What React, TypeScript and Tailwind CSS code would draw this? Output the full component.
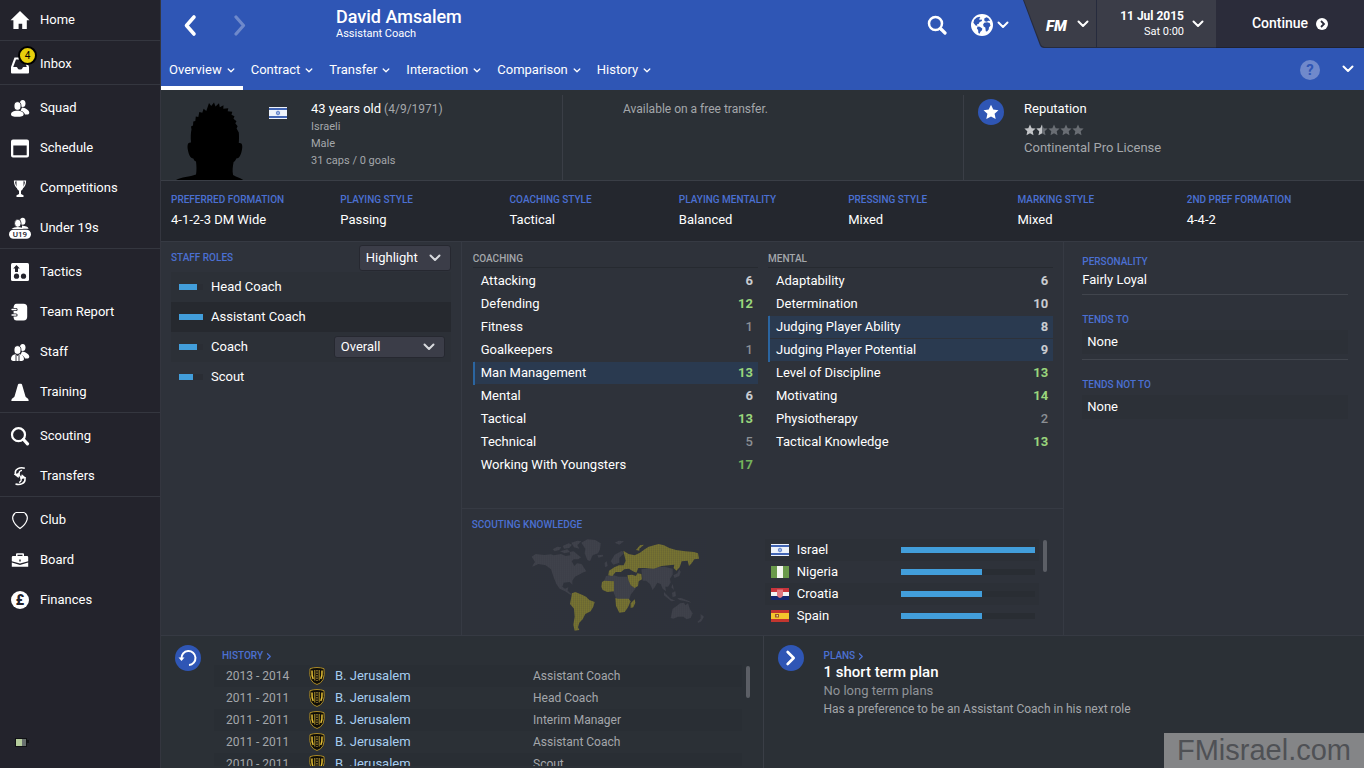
import { useId, type ReactNode } from "react"
import clsx from "clsx"

/* ---------- icons ---------- */

const Chevron = ({ className = "" }: { className?: string }) => (
  <svg viewBox="0 0 12 8" className={clsx("shrink-0 fill-none stroke-current", className)} aria-hidden="true">
    <path d="M1.5 1.5 6 6l4.500-4.500" strokeWidth="2" strokeLinecap="round" strokeLinejoin="round" />
  </svg>
)

const NavSvg = ({ children }: { children: ReactNode }) => (
  <svg viewBox="0 0 20 20" className="h-5 w-5 fill-white" aria-hidden="true">
    {children}
  </svg>
)

const Heads = () => (
  <>
    <path d="M12 9.500c3 .5 7.300 2.300 7.300 5.300 0 1.700-1.800 2-4.300 1.700-.6-1.900-2-3-4.400-3.700z" />
    <ellipse cx="12.700" cy="5.500" rx="2.800" ry="3.600" />
    <ellipse cx="7.500" cy="8" rx="3.500" ry="4.300" className="stroke-[#23232c]" strokeWidth=".8" />
  </>
)

const icons: Record<string, ReactNode> = {
  Home: (
    <NavSvg>
      <path d="M10 1 19.500 10.200H16.800V19H12.200V13.800H8.600V19H3.400V10.200H.5z" />
    </NavSvg>
  ),
  Inbox: (
    <NavSvg>
      <path
        fillRule="evenodd"
        d="M4.500 3.500h11L19 13v5.500q0 1-1 1H2q-1 0-1-1V13zM6 5.500 3.200 13H6.300q1 0 1.300 1.200.3 1.300 2.400 1.300t2.400-1.300Q12.700 13 13.700 13h3.100L14 5.500z"
      />
    </NavSvg>
  ),
  Squad: (
    <NavSvg>
      <Heads />
      <path d="M1 16.200c0-2 2.500-3.400 6.300-3.400s6.300 1.400 6.300 3.400-2.500 2.600-6.300 2.600-6.300-.6-6.300-2.600z" />
    </NavSvg>
  ),
  Schedule: (
    <NavSvg>
      <path fillRule="evenodd" d="M3 1.500h14q2 0 2 2v14q0 2-2 2H3q-2 0-2-2v-14q0-2 2-2zM3.300 7.500v9.700h13.400V7.500z" />
    </NavSvg>
  ),
  Competitions: (
    <NavSvg>
      <path d="M6.500 2.500h7v5q0 4-2.500 5.200v3.300l2.500 1.200v1.800h-7v-1.800L9 16v-3.300Q6.500 11.500 6.500 7.500z" />
      <path d="M6.500 3H4.500q0 5 3 6.700M13.500 3h2q0 5-3 6.700" className="fill-none stroke-white" strokeWidth="1.200" />
    </NavSvg>
  ),
  "Under 19s": (
    <svg viewBox="0 0 24 24" className="h-6 w-6 shrink-0 fill-white" aria-hidden="true">
      <path d="M14 9.500c3 .3 6.500 1.500 6.500 3.300H14z" />
      <ellipse cx="14.700" cy="5.200" rx="2.800" ry="3.500" />
      <ellipse cx="9.800" cy="7.300" rx="3.300" ry="4" className="stroke-[#23232c]" strokeWidth=".8" />
      <path d="M3.500 13q2-2 6.300-2t6 2z" />
      <rect x="1" y="13.800" width="22" height="9" rx="4.500" />
      <text x="12" y="21.300" textAnchor="middle" className="fill-[#23232c] font-[Roboto] text-[8px] font-medium">
        U19
      </text>
    </svg>
  ),
  Tactics: (
    <NavSvg>
      <rect x="1" y="1" width="18" height="18" rx="1.500" />
      <g className="fill-[#23232c]">
        <path d="M6.500 3 9.800 6.600H8V10H5V6.600H3.200z" />
        <circle cx="6.500" cy="14.200" r="2.600" />
        <circle cx="13.500" cy="14.200" r="2.600" />
      </g>
    </NavSvg>
  ),
  "Team Report": (
    <NavSvg>
      <path d="M6.500 1.800h7q3.700 0 3.700 3.500v9.500q0 3.700-3.700 3.700h-7Q4 18.500 3.600 16v-1.500h2.500q1.500 0 1.500-1.500t-1.500-1.500H3.600V9h2.500q1.500 0 1.500-1.500T6.100 6H3.600Q3.500 2 6.500 1.800z" />
      <path d="M2 7.500h4M2 13h4" className="stroke-white" strokeWidth="1.300" strokeLinecap="round" />
    </NavSvg>
  ),
  Staff: (
    <NavSvg>
      <Heads />
      <path d="M1 17c0-2.500 1.600-4.500 4.400-4.700L7.500 14l2.100-1.700C12.400 12.500 14 14.500 14 17c0 1.600-1.300 2-3.500 2h-6C2.300 19 1 18.600 1 17z" />
      <path d="M6 13v6M9 13v6" className="stroke-[#23232c]" strokeWidth=".9" />
    </NavSvg>
  ),
  Training: (
    <NavSvg>
      <path d="M8 2.500q.3-.8 1-.8h2q.7 0 1 .8L15.500 14.500q.4 1 1.300 1.300 2 .7 1.900 3.200H1.300q-.1-2.500 1.900-3.200.9-.3 1.300-1.300z" />
    </NavSvg>
  ),
  Scouting: (
    <NavSvg>
      <circle cx="8.500" cy="8.700" r="6.500" className="fill-none stroke-white" strokeWidth="2.200" />
      <path d="m13.500 13.500 4 4.300" className="stroke-white" strokeWidth="3.200" strokeLinecap="round" />
    </NavSvg>
  ),
  Transfers: (
    <NavSvg>
      <g className="fill-none stroke-white" strokeWidth="1.500">
        <path d="M14.800 2.200C9.500.8 5 3 5.300 7v2" />
        <path d="M5.500 18c5 1.500 9.800-.8 9.500-4.800v-2" />
        <path d="M9 16.300c2-.5 2.800-2.300 1.800-4.800-.6-1.300-1.800-2-1.800-4 0-1.700 1-3 3-3.200" strokeWidth="1.300" />
      </g>
      <path d="M3.800 8.200 9.800 6.800 8.500 12zM16.200 12 10.300 13.200l1.500-5z" />
    </NavSvg>
  ),
  Club: (
    <NavSvg>
      <path
        d="M6.200 2.500h7.600q1 .2 1.600 1 2.600 2.800 1.700 6.200-1.400 5-7.100 8.800Q4.300 14.700 2.900 9.700 2 6.300 4.600 3.500q.6-.8 1.600-1z"
        className="fill-none stroke-white"
        strokeWidth="1.200"
      />
    </NavSvg>
  ),
  Board: (
    <NavSvg>
      <path fillRule="evenodd" d="M6 6V4.300q0-1 1-1h6q1 0 1 1V6h3q1.200 0 1.200 1.200v4L10 13.600 1.800 11.200v-4Q1.800 6 3 6zm1.500 0h5V4.800h-5zM9.300 9.600v1.800h1.400V9.600z" />
      <path d="m1.800 12.500 8.200 2.400 8.200-2.400v4.300H1.800z" />
    </NavSvg>
  ),
  Finances: (
    <NavSvg>
      <circle cx="10" cy="10" r="9" />
      <text x="10" y="15" textAnchor="middle" className="fill-[#23232c] font-[Roboto] text-[14px] font-black">
        £
      </text>
    </NavSvg>
  ),
}

const Star = ({ className = "" }: { className?: string }) => (
  <svg viewBox="0 0 12 12" className={clsx("shrink-0", className)} aria-hidden="true">
    <path d="m6 .5 1.700 3.700 3.900.4-2.900 2.700.8 4L6 9.300l-3.500 2 .8-4L.4 4.600l3.900-.4z" className="fill-current" />
  </svg>
)

const Flag = ({ country }: { country: string }) => {
  const art: Record<string, ReactNode> = {
    Israel: (
      <>
        <path d="M0 0h18v12H0z" fill="#eef3fb" />
        <path d="M0 1h18v2H0zM0 9h18v2H0z" fill="#4265b4" />
        <path d="m9 3.800 1.900 3.300H7.100zM9 8.200 7.100 4.900h3.800z" fill="none" stroke="#4f74c4" strokeWidth=".7" />
      </>
    ),
    Nigeria: (
      <>
        <path d="M0 0h18v12H0z" fill="#6a9a4b" />
        <path d="M6 0h6v12H6z" fill="#f3f6f0" />
      </>
    ),
    Croatia: (
      <>
        <path d="M0 0h18v4H0z" fill="#c9343c" />
        <path d="M0 4h18v4H0z" fill="#f2f2f4" />
        <path d="M0 8h18v4H0z" fill="#14256f" />
        <path d="M6 1.500h6v5Q12 9 9 10 6 9 6 6.500z" fill="#e0777f" />
      </>
    ),
    Spain: (
      <>
        <path d="M0 0h18v12H0z" fill="#c2362f" />
        <path d="M0 3h18v6H0z" fill="#f4c72c" />
        <path d="M4 4h4v3.500H4z" fill="#9a5a25" />
        <path d="M5.500 5H7v1.500H5.500z" fill="#e8d9a0" />
      </>
    ),
  }
  return (
    <svg viewBox="0 0 18 12" className="h-3 w-[18px] shrink-0" role="img" aria-label={country}>
      {art[country]}
    </svg>
  )
}

const Crest = () => (
  <svg viewBox="0 0 16 18" className="h-[18px] w-4" aria-hidden="true">
    <path d="M8 .5q4 0 7 1.200 1 6.300-1 11Q12 16.500 8 17.500 4 16.500 2 12.700 0 8 1 1.700 4 .5 8 .5z" fill="#0d0c08" stroke="#a98a28" strokeWidth="1" />
    <path d="M3 3.500q-.4 5.500 1.200 8.500M13 3.500q.4 5.500-1.200 8.500" stroke="#e3be35" strokeWidth="1.500" fill="none" />
    <path d="M5.800 3v10.500M10.200 3v10.500" stroke="#e3be35" strokeWidth=".8" />
    <path d="M8 3v11" stroke="#8a7030" strokeWidth="1.600" strokeDasharray="1.500 1" />
  </svg>
)

const Silhouette = () => (
  <svg viewBox="0 0 70 78" className="h-[78px] w-[70px] shrink-0" role="img" aria-label="No photo">
    <path d="M0 78c5-3 14-3 20-5.500.8-4 .5-9 0-13-1.500-.5-2-1.500-2.700-3-3 0-4.500-4-5.300-8-1-5-.5-8.500 3-8-.5-5-.2-10 .5-13l-.5-3 2-1 .3-4 2-.5.500-4.500 2.500.5 1-5 3 .7 1.300-4 2.700 2.200L33 1l2.200 3L38 .5l1.500 4L43 1.200l.8 4 3.700-2-.2 3.500 5-.5-.6 3 4.600.6-.8 3 3 1.500-1 2.500 3 2.500-1.200 2 2.300 3-1 2.200 2.200 4c.3 3 .3 7 0 10.500 3.700-.8 4 3 3 7.500-1 4.500-2.500 8-5.500 8-.8 2-1.500 3-2.700 3.500-.8 4-1.500 9-.5 13 4 2.500 6.500 2.500 10.200 5z" className="fill-black" />
  </svg>
)

const WorldMap = () => {
  const dots = useId()
  return (
    <svg viewBox="210 95 531 285" className="h-[95px] w-[177px]" role="img" aria-label="Scouting knowledge map">
      <defs>
        <pattern id={dots} width="6" height="6" patternUnits="userSpaceOnUse">
          <path d="M0 5h6M5 0v6" stroke="#2e323a" strokeWidth="1" strokeOpacity=".45" />
        </pattern>
      </defs>
      <g fill="#40434b">
        <path d="m215 154 12-8 26 3 20-2 8 3 22-4 14 6 14-2-2-10 12-2 14 12 8 6-8 6-14 0-6 6 8 14 8-8 14 2 6 10 8 12-12 4-6 4-16 8-8 12 0 12-8-8-18 2-4 12 8 6 10-4-2 10 8 8 8 2-8 2-16-10-16-8-10-14-8-20-8-24-16-12-22-4-18 8 2-6 6-8z" />
        <path d="m278 132 14-8 12 2-6 8-14 4zM308 122l18-8 10 4-8 10-16 2zM334 112l18-6 12 2-12 12 6 10-16-4zM300 138l22-6 8 8-16 4z" />
        <path d="m364 112 18-10 24 2 16 10-2 18-6 12-16 6-8 18-8-4-8-20 2-14z" />
        <path d="m412 150 16-2 2 5-14 4zM464 112l12-6 16 2-14 10zM434 172l6-4 3 14-8 4zM452 168l12-20 22-12 6 8-14 14 0 14-18 6z" />
        <path d="m438 212 18-4 20 6 26 0 4 10 8 18 14 2-2 6-14 18-4 14-20 4-20-6-8-22 2-28-26-2-8 10z" />
        <path d="m544 192 40-6 30-2 24 6 0 18-8 12 2 12-8 12-8 0 2 14-10-8-6-14-10-4-8 14-6 8-8-18-12-10-10 0z" />
        <path d="m640 210 12-6 6-12 4 8-4 12-14 6zM612 260l8 8 12 12 14 6-12 2-22-18zM636 262l10-4 2 14-10 4zM652 278l12 0 24 10 6 4-18-4-18-4zM634 246l4-10 4 18z" />
        <path d="m638 310 12-8 10-8 12-2 4 8 8-6 6 18 8 12-6 14-12 4-10-8-16 0-14 6-8-2z" />
        <path d="m722 326 10 8-8 14-8 4-4-2 10-10z" />
      </g>
      <g fill="#7a7630">
        <path d="m490 136 16 10 18 4 16-8 14-10 12-8 16-4 14-4 16 4 16 8 20 6 28 4 26 2 12 4 3 16-14 2-8 12-8 8-4-16-18 2-6 18-10 10-8-8 2-10-16 2-22 2-24 8-24-2-22 0-6 14-10-4-12-8-14 2-10 8-16 0-10 12-12-2 2-14 16-10 14-6 14 0 6-14z" />
        <path d="m528 134 12-14 12-2-14 12 0 6zM502 210l14-2 12 4 4-8 12 2 2 16-10 6-2 14-10 6-12-8-6-14z" />
        <path d="m426 230 6-4 30 2 0 30-20 2-14-6-4-10zM466 278l8 2 32 0 6 8-8 18-10 14-16 2-10-20zM512 294l12-12 2 10-6 14-8 2z" />
        <path d="m336 264 10-4 20 8 12 6 10 10 16 6-4 14-8 14-16 8-8 16-10 10-4 14 4 8-14 2-4-18 4-24-2-24-12-14z" />
      </g>
      <path d="M210 95h531v285H210z" fill={`url(#${dots})`} />
    </svg>
  )
}

/* ---------- data ---------- */

const navGroups = [
  ["Home"],
  ["Inbox"],
  ["Squad", "Schedule", "Competitions", "Under 19s"],
  ["Tactics", "Team Report", "Staff", "Training"],
  ["Scouting", "Transfers"],
  ["Club", "Board", "Finances"],
]

const tabs = ["Overview", "Contract", "Transfer", "Interaction", "Comparison", "History"]

const styles = [
  ["Preferred Formation", "4-1-2-3 DM Wide"],
  ["Playing Style", "Passing"],
  ["Coaching Style", "Tactical"],
  ["Playing Mentality", "Balanced"],
  ["Pressing Style", "Mixed"],
  ["Marking Style", "Mixed"],
  ["2nd Pref Formation", "4-4-2"],
]

const roles = [
  { name: "Head Coach", level: 75 },
  { name: "Assistant Coach", level: 100, active: true },
  { name: "Coach", level: 75, select: true },
  { name: "Scout", level: 60 },
]

type Attribute = { name: string; value: number; key?: boolean }

const coaching: Attribute[] = [
  { name: "Attacking", value: 6 },
  { name: "Defending", value: 12 },
  { name: "Fitness", value: 1 },
  { name: "Goalkeepers", value: 1 },
  { name: "Man Management", value: 13, key: true },
  { name: "Mental", value: 6 },
  { name: "Tactical", value: 13 },
  { name: "Technical", value: 5 },
  { name: "Working With Youngsters", value: 17 },
]

const mental: Attribute[] = [
  { name: "Adaptability", value: 6 },
  { name: "Determination", value: 10 },
  { name: "Judging Player Ability", value: 8, key: true },
  { name: "Judging Player Potential", value: 9, key: true },
  { name: "Level of Discipline", value: 13 },
  { name: "Motivating", value: 14 },
  { name: "Physiotherapy", value: 2 },
  { name: "Tactical Knowledge", value: 13 },
]

const knowledge = [
  { country: "Israel", level: 100 },
  { country: "Nigeria", level: 60 },
  { country: "Croatia", level: 60 },
  { country: "Spain", level: 60 },
]

const history = [
  ["2013 - 2014", "Assistant Coach"],
  ["2011 - 2011", "Head Coach"],
  ["2011 - 2011", "Interim Manager"],
  ["2011 - 2011", "Assistant Coach"],
  ["2010 - 2011", "Scout"],
]

const valueColor = (v: number) => {
  if (v > 15) return "text-[#74b45c] font-bold"
  if (v > 10) return "text-[#9ad67c] font-bold"
  if (v > 5) return "text-[#c9ccd0] font-bold"
  return "text-[#8b8f94] font-medium"
}

/* ---------- pieces ---------- */

const Label = ({ children, className = "text-[#4b70d2]" }: { children: ReactNode; className?: string }) => (
  <h2 className={clsx("text-[10px] leading-4 font-medium uppercase", className)}>{children}</h2>
)

const Dropdown = ({ label, value, className }: { label: string; value: string; className: string }) => (
  <div className={clsx("relative", className)}>
    <select
      aria-label={label}
      className="h-full w-full appearance-none rounded-[3px] border border-[#262830] bg-[#3b3d48] pl-1.5 text-[13px] text-white"
    >
      <option>{value}</option>
    </select>
    <Chevron className="pointer-events-none absolute top-1/2 right-2.5 h-2 w-3 -translate-y-1/2 text-[#d8dade]" />
  </div>
)

const AttributeTable = ({ title, rows }: { title: string; rows: Attribute[] }) => (
  <div>
    <div className="border-b border-[#262a30]">
      <Label className="text-[#a4a7ab]">{title}</Label>
    </div>
    <table className="mt-px w-full border-collapse" aria-label={title}>
      <tbody>
        {rows.map(({ name, value, key }) => (
          <tr key={name} className={clsx("h-[23px] border-b border-[#2e323a]", key && "bg-[#2a3a50]")}>
            <th
              scope="row"
              className={clsx("border-l-2 pl-1.5 text-left font-normal text-white", key ? "border-l-[#2b65a0]" : "border-l-transparent")}
            >
              {name}
            </th>
            <td className={clsx("pr-[5px] text-right", valueColor(value))}>{value}</td>
          </tr>
        ))}
      </tbody>
    </table>
  </div>
)

const Sidebar = () => (
  <nav className="flex w-[161px] shrink-0 flex-col border-r border-[#34363f] bg-[#23232c]">
    {navGroups.map((group, i) => (
      <ul key={i} className={clsx("pt-[3px] first:pt-0", i < navGroups.length - 1 && "border-b border-[#34363f]")}>
        {group.map((item) => (
          <li key={item}>
            <a href="#" className="flex h-10 items-center gap-2.5 pl-2.5 text-white">
              <span className="relative flex w-5 justify-center">
                {icons[item]}
                {item === "Inbox" && (
                  <span className="absolute -top-2 left-2 flex h-[19px] w-[19px] items-center justify-center rounded-full border-2 border-black bg-[#e6cf0c] text-[10px] text-black">
                    4
                  </span>
                )}
              </span>
              {item}
            </a>
          </li>
        ))}
      </ul>
    ))}
    <svg viewBox="0 0 14 9" className="mt-auto mb-[21px] ml-[15px] h-[9px] w-3.5" role="img" aria-label="Battery">
      <path d="M0 0h12v2h2v3h-2v4H0z" className="fill-[#101114]" />
      <path d="M1 1h6v7H1z" className="fill-[#b5cc9c]" />
      <path d="M7 1h4v7H7z" className="fill-[#68706e]" />
    </svg>
  </nav>
)

const Header = () => (
  <header className="bg-[#2f56b5] text-white">
    <div className="flex h-12 items-start">
      <button aria-label="Back" className="mt-3 ml-5 h-7 w-5">
        <svg viewBox="0 0 20 28" className="fill-none stroke-white" strokeWidth="3.600" strokeLinecap="round" strokeLinejoin="round">
          <path d="M13 5 5.500 13.500 13 22" />
        </svg>
      </button>
      <button aria-label="Forward" className="mt-3 ml-7 h-7 w-5 opacity-30">
        <svg viewBox="0 0 20 28" className="fill-none stroke-white" strokeWidth="3.200" strokeLinecap="round" strokeLinejoin="round">
          <path d="m7 5 7.500 8.500L7 22" />
        </svg>
      </button>
      <div className="mt-1.5 ml-[87px]">
        <h1 className="text-[18px] leading-[22px] font-medium">David Amsalem</h1>
        <p className="text-[11px] leading-3">Assistant Coach</p>
      </div>
      <button aria-label="Search" className="mt-[15px] ml-auto h-5 w-5">
        <svg viewBox="0 0 20 20" className="fill-none stroke-white" strokeLinecap="round">
          <circle cx="8.500" cy="8.500" r="6.500" strokeWidth="2.500" />
          <path d="m14 14 4 4" strokeWidth="3.200" />
        </svg>
      </button>
      <button aria-label="World" className="mt-3.5 ml-6 flex h-[22px] items-center gap-1">
        <svg viewBox="0 0 22 22" className="h-[22px] w-[22px]">
          <circle cx="11" cy="11" r="11" className="fill-white" />
          <g className="fill-[#2f56b5]">
            <path d="M3.200 5.800 5.800 3.500l2.700-.8.9 1.300-1.700 1.100 1.300.7 1.700-.3.300 1.600-2.300 1-1.200 1.900-1.500.3.300 1.500-1.700-.4-2.200-2.700z" />
            <path d="m6.500 12.400 2.300.3 2.500 1.800-.3 1.800-1.600 1.400-.8 2-1.200-.6-.3-3.200-1.200-1.500z" />
            <path d="m13.500 4.300 2.200-1 2 1.300 1.500 2.300-1.900-.1-1.400.9-2.100-.4-.6-1.300z" />
            <path d="m13.200 8.700 2.900-.4 2.600.8.800 2.600-1.500 1.500-.3 2.300-1.700 2.100-1.200-.4-.5-3.800-1.700-.9-.5-1.900z" />
          </g>
        </svg>
        <Chevron className="h-2 w-3" />
      </button>
      <button className="relative ml-3.5 flex h-[47px] w-[73px] items-center pl-[23px]">
        <svg viewBox="0 0 73 48" className="absolute inset-x-0 top-0 h-12 w-[73px]" aria-hidden="true">
          <path d="M0 0h73v48H21q-3 0-4.200-3z" className="fill-[#262b3d]" />
          <path d="M1 0h72v47H21.500q-2.600 0-3.700-2.700z" className="fill-[#3b3d48]" />
        </svg>
        <span className="relative pt-1 text-[15px] leading-5 font-black italic">FM</span>
        <Chevron className="absolute right-[7px] h-2 w-3" />
      </button>
      <button className="flex h-12 w-[120px] items-center justify-end gap-2 border-b border-l border-[#262b3d] bg-[#3b3d48] pr-3">
        <span className="pt-px text-right leading-4">
          <span className="block text-[12px] font-bold">11 Jul 2015</span>
          <span className="block text-[11px]">Sat 0:00</span>
        </span>
        <Chevron className="h-2 w-3" />
      </button>
      <button className="flex h-12 w-[148px] items-center justify-center gap-2 border-b border-[#20222e] bg-[#2b2c3a] text-[14px] font-medium">
        Continue
        <svg viewBox="0 0 12 12" className="h-3 w-3" aria-hidden="true">
          <circle cx="6" cy="6" r="6" className="fill-white" />
          <path d="m5 3 3 3-3 3" className="fill-none stroke-[#2b2c3a]" strokeWidth="1.800" />
        </svg>
      </button>
    </div>
    <div className="flex h-[42px] items-stretch">
      {tabs.map((tab, i) => (
        <button
          key={tab}
          className={clsx("flex items-center gap-[5px] border-b-4 px-2 pt-1.5", i === 0 ? "border-white" : "border-transparent")}
        >
          {tab}
          <Chevron className="h-[5px] w-2" />
        </button>
      ))}
      <button aria-label="Help" className="mt-3 ml-auto h-5 w-5 rounded-full bg-[#7089cb] text-[15px] leading-5 font-bold text-[#2f56b5]">
        ?
      </button>
      <button aria-label="More" className="mr-2 ml-5 px-0.5">
        <Chevron className="h-2 w-3" />
      </button>
    </div>
  </header>
)

const RoundIcon = ({ children }: { children: ReactNode }) => (
  <span className="flex h-[26px] w-[26px] shrink-0 items-center justify-center rounded-full bg-[#2f56b5] text-white">{children}</span>
)

const Summary = () => (
  <section className="grid grid-cols-3 border-b border-[#3a3e46] bg-[#2b3036] pt-[5px] text-[#a4a7ab]">
    <div className="flex pl-[15px]">
      <div className="pt-[7px]">
        <Silhouette />
      </div>
      <div className="pt-3 pl-[23px]">
        <Flag country="Israel" />
      </div>
      <div className="pt-[5px] pl-6 text-[11px] leading-[17px]">
        <p className="text-[12px] leading-[18px]">
          <span className="text-[13px] text-white">43 years old</span> (4/9/1971)
        </p>
        <p>Israeli</p>
        <p>Male</p>
        <p>31 caps / 0 goals</p>
      </div>
    </div>
    <p className="border-l border-[#3a3e46] pt-[5px] pl-[60px] text-[12px] leading-[18px]">Available on a free transfer.</p>
    <div className="flex gap-5 border-l border-[#3a3e46] pt-1 pl-3.5">
      <RoundIcon>
        <Star className="h-4 w-4" />
      </RoundIcon>
      <div className="pt-px leading-[18px]">
        <h2 className="text-white">Reputation</h2>
        <div className="mt-1.5 mb-[3px] flex h-3" role="img" aria-label="1.5 out of 5 stars">
          {[1, 2, 3, 4, 5].map((n) => (
            <span key={n} className="relative">
              <Star className={clsx("h-3 w-3", n === 1 ? "text-[#c3c5c8]" : "text-[#696d73]")} />
              {n === 2 && (
                <span className="absolute top-0 left-0 w-1.5 overflow-hidden">
                  <Star className="h-3 w-3 text-[#c3c5c8]" />
                </span>
              )}
            </span>
          ))}
        </div>
        <p>Continental Pro License</p>
      </div>
    </div>
  </section>
)

const StyleStrip = () => (
  <dl className="grid grid-cols-7 bg-[#24272e] pt-[11px] pr-2 pb-[11px] pl-2.5">
    {styles.map(([name, value]) => (
      <div key={name}>
        <dt className="text-[10px] leading-4 font-medium text-[#4b70d2] uppercase">{name}</dt>
        <dd className="pt-0.5 leading-5 text-white">{value}</dd>
      </div>
    ))}
  </dl>
)

const StaffRoles = () => (
  <section className="border-r border-[#363a43] px-2.5 pt-[3px]">
    <div className="flex items-center justify-between">
      <Label>Staff Roles</Label>
      <Dropdown label="Highlight" value="Highlight" className="h-[26px] w-[92px]" />
    </div>
    <ul className="pt-px">
      {roles.map(({ name, level, active, select }) => (
        <li key={name} className={clsx("flex h-[30px] items-center pr-1.5 pl-2 text-white", active ? "bg-[#26292f]" : "odd:bg-[#2c3037]")}>
          <span className="mr-2 h-1.5 w-6 bg-[#2a2d34]">
            <span className="block h-full bg-[#429edb]" style={{ width: `${level}%` }} />
          </span>
          {name}
          {select && <Dropdown label="Coach role" value="Overall" className="ml-auto h-[22px] w-[111px]" />}
        </li>
      ))}
    </ul>
  </section>
)

const ScoutingKnowledge = () => (
  <section className="flex grow flex-col border-t border-[#363a43] pt-2 pl-2.5">
    <Label>Scouting Knowledge</Label>
    <div className="flex">
      <div className="w-[293px] pt-1 pl-[58px]">
        <WorldMap />
      </div>
      <div className="flex grow gap-1 pt-1.5 pr-4">
        <ul className="grow">
          {knowledge.map(({ country, level }) => (
            <li key={country} className="flex h-[22px] items-center gap-2 pr-1 pl-1.5 text-white odd:bg-[#2c3037]">
              <Flag country={country} />
              <span className="grow">{country}</span>
              <span className="h-1.5 w-[134px] bg-[#292d33]">
                <span className="block h-full bg-[#429edb]" style={{ width: `${level}%` }} />
              </span>
            </li>
          ))}
        </ul>
        <span className="mt-px h-8 w-1 rounded-full bg-[#5c5f66]" />
      </div>
    </div>
  </section>
)

const Personality = () => (
  <section className="border-l border-[#363a43] pt-3 pr-4 pl-[18px] text-white">
    <Label>Personality</Label>
    <p className="border-b border-[#41454d] pb-1 leading-5">Fairly Loyal</p>
    <div className="border-b border-[#41454d] pt-[17px] pb-[5px]">
      <Label>Tends To</Label>
      <p className="mt-0.5 bg-[#2c3037] pl-[5px] leading-6">None</p>
    </div>
    <div className="pt-[17px]">
      <Label>Tends Not To</Label>
      <p className="mt-0.5 bg-[#2c3037] pl-[5px] leading-6">None</p>
    </div>
  </section>
)

const History = () => (
  <section className="flex pt-[9px] pr-px pl-3.5">
    <RoundIcon>
      <svg viewBox="0 0 20 20" className="h-5 w-5 fill-none stroke-white" strokeWidth="2" aria-hidden="true">
        <path d="M3.500 10.500a7 7 0 1 1 7.500 6.500" />
        <path d="M.5 9.500h6L3.500 13z" className="fill-white stroke-none" />
      </svg>
    </RoundIcon>
    <div className="ml-[13px] grow pt-[3px]">
      <a href="#" className="flex items-center gap-0.5 pl-2 text-[#4b70d2]">
        <Label>History</Label>
        <Chevron className="h-[5px] w-2 -rotate-90" />
      </a>
      <div className="mt-px flex h-[101px] overflow-hidden pr-3">
        <table className="h-min w-full table-fixed border-collapse" aria-label="History">
          <tbody>
            {history.map(([years, role], i) => (
              <tr key={i} className="h-[22px] text-[12px] text-[#a4a7ab] odd:bg-[#292e34]">
                <td className="w-[95px] pl-3">{years}</td>
                <td className="w-[26px]">
                  <Crest />
                </td>
                <td className="w-[198px] text-[13px]">
                  <a href="#" className="text-[#a6cdf0]">
                    B. Jerusalem
                  </a>
                </td>
                <td>{role}</td>
              </tr>
            ))}
          </tbody>
        </table>
        <span className="mt-px ml-1 h-8 w-1 shrink-0 rounded-full bg-[#5c5f66]" />
      </div>
    </div>
  </section>
)

const Plans = () => (
  <section className="flex gap-5 border-l border-[#3a3e46] pt-[9px] pl-3.5">
    <RoundIcon>
      <Chevron className="h-3 w-4 -rotate-90" />
    </RoundIcon>
    <div className="pt-[3px] text-[#a4a7ab]">
      <a href="#" className="flex items-center gap-0.5 text-[#4b70d2]">
        <Label>Plans</Label>
        <Chevron className="h-[5px] w-2 -rotate-90" />
      </a>
      <p className="text-[15px] leading-4 font-medium text-white">1 short term plan</p>
      <p className="pt-px leading-5 text-[#8f9398]">No long term plans</p>
      <p className="text-[12px] leading-4">Has a preference to be an Assistant Coach in his next role</p>
    </div>
  </section>
)

export default function App() {
  return (
    <div className="flex min-h-screen bg-[#2b3036] font-[Roboto,sans-serif] text-[13px]">
      <Sidebar />
      <main className="relative flex min-w-0 grow flex-col">
        <Header />
        <Summary />
        <StyleStrip />
        <div className="grid min-h-[395px] grid-cols-[1fr_2fr_1fr] border-y border-[#363a43] bg-[#2e323a]">
          <StaffRoles />
          <div className="flex flex-col">
            <section className="grid grid-cols-2 gap-2.5 pt-[9px] pr-2.5 pb-[31px] pl-[11px]">
              <AttributeTable title="Coaching" rows={coaching} />
              <AttributeTable title="Mental" rows={mental} />
            </section>
            <ScoutingKnowledge />
          </div>
          <Personality />
        </div>
        <div className="grid grow grid-cols-2">
          <History />
          <Plans />
        </div>
        <p className="absolute right-0 bottom-0 bg-[#848587] px-[13px] font-['Liberation_Sans',sans-serif] text-[29px] leading-[35px] text-[#4f5155]">
          FMisrael.com
        </p>
      </main>
    </div>
  )
}
